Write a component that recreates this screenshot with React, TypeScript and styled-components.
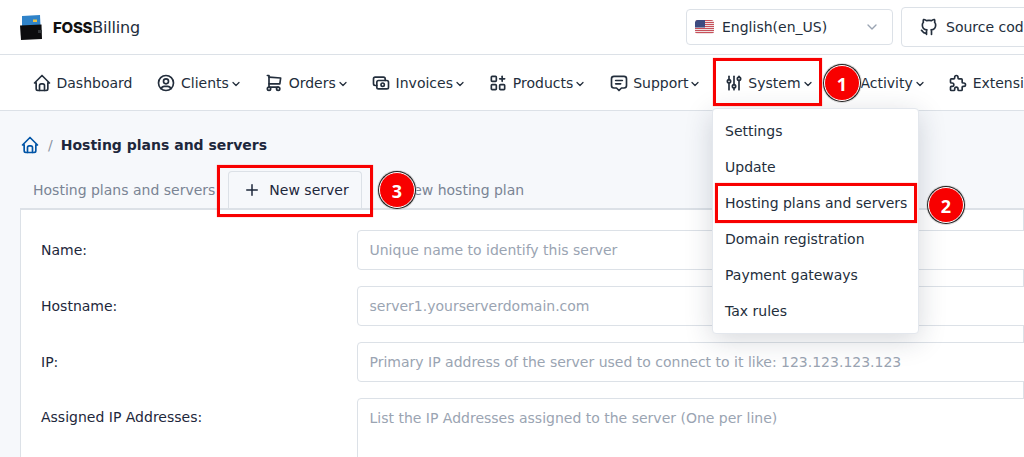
import React from 'react';
import styled, { createGlobalStyle } from 'styled-components';
import {
  TbActivity,
  TbAdjustments,
  TbApps,
  TbBrandGithub,
  TbCash,
  TbChevronDown,
  TbHome,
  TbMessage2,
  TbPlus,
  TbPuzzle,
  TbShoppingCart,
  TbUserCircle,
} from 'react-icons/tb';

const GlobalStyle = createGlobalStyle`
  html, body {
    margin: 0;
    padding: 0;
    height: 100%;
    overflow: hidden;
    background: #f6f8fb;
  }
  * { box-sizing: border-box; }
`;

const Page = styled.div`
  position: relative;
  width: 1024px;
  height: 457px;
  overflow: hidden;
  background: #f6f8fb;
  color: #1d273b;
  font-family: 'DejaVu Sans', sans-serif;
  font-size: 14px;
`;

const Header = styled.header`
  height: 55px;
  display: flex;
  align-items: center;
  justify-content: space-between;
  padding: 0 0 0 20px;
  background: #fff;
  border-bottom: 1px solid #dce1e7;
`;

const Brand = styled.div`
  display: flex;
  align-items: center;
  gap: 11px;
  font-size: 16px;
  letter-spacing: -0.2px;
  color: #232e3c;

  b {
    color: #111;
    font-family: 'Inter', sans-serif;
    font-weight: 800;
    font-size: 15px;
    letter-spacing: -0.25px;
  }
`;

const HeaderTools = styled.div`
  display: flex;
  align-items: center;
  gap: 8px;
  margin-right: -40px;
`;

const LangSelect = styled.div`
  width: 207px;
  height: 36px;
  display: flex;
  align-items: center;
  padding: 0 12px 0 8px;
  gap: 8px;
  background: #fff;
  border: 1px solid #dce1e7;
  border-radius: 4px;
  color: #232e3c;

  svg:last-child {
    margin-left: auto;
    color: #9aa4b2;
  }
`;

const SourceButton = styled.div`
  width: 163px;
  height: 40px;
  display: flex;
  align-items: center;
  gap: 7px;
  padding: 0 17px;
  white-space: nowrap;
  background: #fff;
  border: 1px solid #dce1e7;
  border-radius: 4px;
  color: #232e3c;
`;

const Nav = styled.nav`
  height: 56px;
  display: flex;
  align-items: center;
  padding-left: 20px;
  background: #fff;
  border-bottom: 1px solid #dce1e7;
  white-space: nowrap;
`;

const NavItem = styled.a`
  display: flex;
  align-items: center;
  padding: 0 12px;
  color: #232e3c;

  > svg:first-child {
    margin-right: 4.5px;
    flex: none;
  }

  > svg:last-child:not(:first-child) {
    margin: 2px -1.65px 0 1px;
    stroke-width: 2.5;
    flex: none;
  }
`;

const Main = styled.main`
  padding: 24px 0 0 20px;
`;

const Breadcrumb = styled.div`
  display: flex;
  align-items: center;
  height: 20px;
  gap: 8px;
  color: #0054a6;

  span {
    color: #8a94a3;
  }

  strong {
    color: #1d273b;
    font-weight: 700;
  }
`;

const Tabs = styled.div`
  display: flex;
  align-items: flex-end;
  height: 39px;
  margin-top: 16px;
  border-bottom: 2px solid #dce1e7;
  white-space: nowrap;
`;

const Tab = styled.div<{ $active?: boolean; $withIcon?: boolean }>`
  height: 37px;
  display: flex;
  align-items: center;
  gap: 8px;
  padding: ${(p) => (p.$withIcon ? '0 12px 0 14px' : '0 12px')};
  color: ${(p) => (p.$active ? '#1d273b' : '#7a8494')};
  border: 1px solid ${(p) => (p.$active ? '#dce1e7' : 'transparent')};
  border-bottom: 0;
  border-radius: 4px 4px 0 0;
`;

const Card = styled.section`
  height: 300px;
  padding: 20px 0 0 20px;
  background: #fff;
  border: 1px solid #dce1e7;
  border-top: 0;
  border-radius: 0 0 4px 4px;
`;

const FormRow = styled.div`
  display: grid;
  grid-template-columns: 316px 720px;
  align-items: center;
  margin-bottom: 16px;
  color: #1d273b;
`;

const RowLabel = styled.label<{ $top?: boolean }>`
  align-self: ${(p) => (p.$top ? 'start' : 'center')};
  padding-top: ${(p) => (p.$top ? '11px' : '0')};
`;

const Field = styled.div<{ $tall?: boolean }>`
  height: ${(p) => (p.$tall ? '90px' : '40px')};
  padding: 10px 11.5px;
  color: #9aa4b2;
  background: #fff;
  border: 1px solid #dce1e7;
  border-radius: 4px;
  line-height: 18px;
  white-space: nowrap;
`;

const Dropdown = styled.div`
  position: absolute;
  left: 712px;
  top: 108px;
  width: 207px;
  height: 226px;
  padding: 4px 0;
  background: #fff;
  border: 1px solid #e3e7ed;
  border-radius: 4px;
  box-shadow: 0 6px 28px rgba(29, 39, 59, 0.18);
`;

const MenuItem = styled.div`
  height: 36px;
  display: flex;
  align-items: center;
  padding-left: 12px;
  color: #232e3c;
  white-space: nowrap;
`;

const Callout = styled.div<{ $x: number; $y: number; $w: number; $h: number }>`
  position: absolute;
  left: ${(p) => p.$x}px;
  top: ${(p) => p.$y}px;
  width: ${(p) => p.$w}px;
  height: ${(p) => p.$h}px;
  border: 3px solid #f80000;
  box-shadow: 0 0 1px rgba(255, 0, 0, 0.5);
  pointer-events: none;
`;

const StepBadge = styled.div<{ $x: number; $y: number }>`
  position: absolute;
  left: ${(p) => p.$x}px;
  top: ${(p) => p.$y}px;
  width: 36px;
  height: 36px;
  padding-top: 2px;
  display: flex;
  align-items: center;
  justify-content: center;
  color: #fff;
  font-family: 'Open Sans', sans-serif;
  font-size: 18px;
  font-weight: 700;
  background: #f80000;
  border: 1px solid #fff;
  border-radius: 50%;
  box-shadow: 0 0 0 1px #222, 0 0 0 2px rgba(200, 200, 200, 0.6);
`;

const Logo = () => (
  <svg width="22" height="26" viewBox="0 0 22 26">
    <path d="M2 2 L20 1 L20.5 12 L2 12 Z" fill="#2f83c9" />
    <rect x="13" y="5.5" width="4" height="2.5" fill="#e8c34a" />
    <path d="M0 11.5 L21.5 10.5 L22 25 L1 26 Z" fill="#0c0c0e" />
    <rect x="18" y="16" width="4" height="3" fill="#33363a" />
  </svg>
);

const UsFlag = () => (
  <svg width="19" height="14" viewBox="0 0 19 14">
    <defs>
      <clipPath id="flag-clip">
        <rect width="19" height="14" rx="3" />
      </clipPath>
    </defs>
    <g clipPath="url(#flag-clip)">
      <rect width="19" height="14" fill="#f2f2f2" />
      {[0, 2, 4, 6, 8, 10, 12].map((y) => (
        <rect key={y} y={y} width="19" height="1.1" fill="#c8505a" />
      ))}
      <rect width="10" height="7.5" fill="#3c4a80" />
    </g>
  </svg>
);

const navItems = [
  { label: 'Dashboard', icon: TbHome, menu: false },
  { label: 'Clients', icon: TbUserCircle, menu: true },
  { label: 'Orders', icon: TbShoppingCart, menu: true },
  { label: 'Invoices', icon: TbCash, menu: true },
  { label: 'Products', icon: TbApps, menu: true },
  { label: 'Support', icon: TbMessage2, menu: true },
  { label: 'System', icon: TbAdjustments, menu: true },
  { label: 'Activity', icon: TbActivity, menu: true },
  { label: 'Extensions', icon: TbPuzzle, menu: true },
];

const systemMenu = [
  'Settings',
  'Update',
  'Hosting plans and servers',
  'Domain registration',
  'Payment gateways',
  'Tax rules',
];

export default function App() {
  return (
    <Page>
      <GlobalStyle />
      <Header>
        <Brand>
          <Logo />
          <span>
            <b>FOSS</b>Billing
          </span>
        </Brand>
        <HeaderTools>
          <LangSelect>
            <UsFlag />
            <span>English(en_US)</span>
            <TbChevronDown size={16} />
          </LangSelect>
          <SourceButton>
            <TbBrandGithub size={20} />
            Source code
          </SourceButton>
        </HeaderTools>
      </Header>
      <Nav>
        {navItems.map(({ label, icon: Icon, menu }) => (
          <NavItem key={label}>
            <Icon size={20} />
            {label}
            {menu && <TbChevronDown size={12} />}
          </NavItem>
        ))}
      </Nav>
      <Main>
        <Breadcrumb>
          <TbHome size={20} />
          <span>/</span>
          <strong>Hosting plans and servers</strong>
        </Breadcrumb>
        <Tabs>
          <Tab>Hosting plans and servers</Tab>
          <Tab $active $withIcon>
            <TbPlus size={18} />
            New server
          </Tab>
          <Tab $withIcon>
            <TbPlus size={18} />
            New hosting plan
          </Tab>
        </Tabs>
        <Card>
          <FormRow>
            <RowLabel>Name:</RowLabel>
            <Field>Unique name to identify this server</Field>
          </FormRow>
          <FormRow>
            <RowLabel>Hostname:</RowLabel>
            <Field>server1.yourserverdomain.com</Field>
          </FormRow>
          <FormRow>
            <RowLabel>IP:</RowLabel>
            <Field>Primary IP address of the server used to connect to it like: 123.123.123.123</Field>
          </FormRow>
          <FormRow>
            <RowLabel $top>Assigned IP Addresses:</RowLabel>
            <Field $tall>List the IP Addresses assigned to the server (One per line)</Field>
          </FormRow>
        </Card>
      </Main>
      <Dropdown>
        {systemMenu.map((item) => (
          <MenuItem key={item}>{item}</MenuItem>
        ))}
      </Dropdown>
      <Callout $x={713} $y={58} $w={109} $h={48} />
      <Callout $x={715} $y={183} $w={202} $h={40} />
      <Callout $x={217} $y={165} $w={156} $h={52} />
      <StepBadge $x={824} $y={65}>1</StepBadge>
      <StepBadge $x={928} $y={187}>2</StepBadge>
      <StepBadge $x={379} $y={172}>3</StepBadge>
    </Page>
  );
}
